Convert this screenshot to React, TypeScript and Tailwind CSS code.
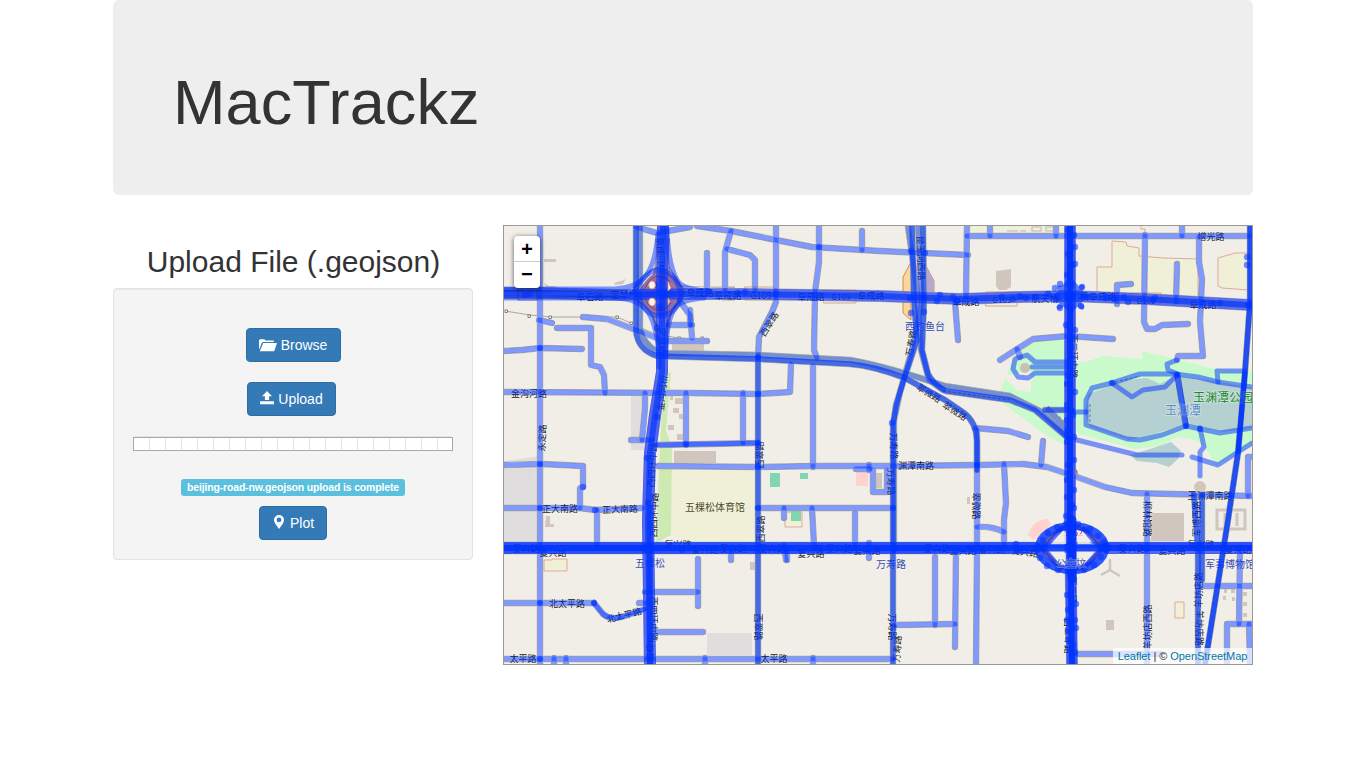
import React from "react";

type Road = [string, number?]; // path, overlay passes (1.5 marks a footpath without a road bed)

const roads: Road[] = [
  ["M540 226V664"],
  ["M539 320L552 323"],
  ["M557 328H591V365L600 367L604 375L605 393"],
  ["M504 351L522 350L540 348L582 349"],
  ["M583 317L607 319L657 338"],
  ["M636 227L657 233L690 227"],
  ["M697 226L731 231L776 240L812 247L880 251L968 255"],
  ["M679 300L690 315V325"],
  ["M668 325H692"],
  ["M668 341H707"],
  ["M690 310L692 338"],
  ["M707 253V289"],
  ["M731 231L725 252V290"],
  ["M727 249L750 255L755 260V290"],
  ["M776 226V302L772 312L759 337L758 358"],
  ["M819 226V262L815 292L814 350L817 358"],
  ["M862 231V250"],
  ["M791 364L790 392L758 394L690 393L504 392"],
  ["M813 366V467"],
  ["M967 226L966 296"],
  ["M967 236H1250"],
  ["M990 226V236"], ["M1056 226V236"], ["M1182 226V236"],
  ["M955 302L958 340"],
  ["M1000 360L1033 339L1068 336L1113 339"],
  ["M1017 349L1020 357"],
  ["M1068 362H1035L1027 355L1015 359L1013 369L1018 377L1028 378L1035 373H1068", 1.5],
  ["M1032 367H1068", 1.5],
  ["M1145 235L1144 322L1147 329H1155L1162 325L1188 324"],
  ["M1117 304V285L1131 284"],
  ["M1177 264L1176 302"],
  ["M1199 237V262L1202 279L1200 322L1203 356H1178L1177 360"],
  ["M1177 360L1167 364L1168 370L1178 374", 1.5],
  ["M1186 426L1162 435L1140 440L1127 439L1086 425V400L1092 388L1112 383L1140 374H1175L1198 377L1218 382L1252 387", 1.5],
  ["M1186 426L1220 433L1252 428", 1.5],
  ["M1112 383L1132 397L1143 390L1165 387L1177 375", 1.5],
  ["M1177 375L1186 426", 1.5],
  ["M1200 428L1204 447L1200 452V476", 1.5],
  ["M1218 382L1217 371H1245", 1.5],
  ["M1077 440L1137 455H1182", 1.5],
  ["M1192 457L1218 465L1238 452L1252 443", 1.5],
  ["M1077 477L1105 487L1132 493L1252 496"],
  ["M1147 494V664"],
  ["M1252 457H1248V496"],
  ["M1070 412H1086", 1.5],
  ["M645 393V408L642 440"], ["M631 440H652"], ["M686 393V445"],
  ["M657 445L758 443", 2],
  ["M504 465L542 464L583 466V487L580 488V508"],
  ["M504 508H580L595 510L643 508"],
  ["M597 510V546"],
  ["M658 466L758 467L813 466L893 466L977 465L1023 464L1047 467L1068 474"],
  ["M743 393V443"],
  ["M856 469H870"], ["M873 470V492H887V470"],
  ["M869 465V470"],
  ["M758 508H893"], ["M784 508V518"], ["M812 508L814 545"], ["M855 513V546"],
  ["M975 428L1008 431L1028 437"], ["M1043 441L1041 465"],
  ["M1004 464L1006 503L1004 520V545"],
  ["M977 527Q992 526 1004 532"],
  ["M731 548V560"], ["M698 559V606"], ["M645 592H698"], ["M657 632H703"],
  ["M504 603H594"],
  ["M594 603L603 614Q610 620 622 617L645 609", 2],
  ["M639 603H650"],
  ["M504 659H893"], ["M554 658V664"], ["M566 658V664"], ["M705 658V664"], ["M813 658V664"],
  ["M787 548V560"], ["M869 543V558"], ["M784 545L786 560"],
  ["M935 557V625"], ["M956 548L955 647"], ["M895 625L955 624"],
  ["M977 430L977 548L976 664"],
  ["M1077 654H1160"], ["M1201 586H1252"], ["M1240 548L1239 624"],
  ["M1252 624H1227V664"], ["M1249 624L1250 664"],
  ["M504 545H1252"], ["M504 551H1030"],
];

const secondary: Road[] = [
  ["M636 226V331Q638 350 657 356L758 359L850 364Q874 366 905 378L945 400L964 413Q976 422 977 440V470", 2],
  ["M640 226V328Q643 345 660 353L758 355L850 360Q885 366 945 386L1010 396L1040 411L1067 436", 1],
  ["M758 358V664", 2],
  ["M912 226L914 300L917 340L905 376L896 405L893 425V664", 2],
  ["M918 226L922 300L912 350L900 392L894 420V550", 1],
  ["M923 226L924 300L922 350L928 374Q933 384 946 391L1010 400L1035 410L1068 438", 2],
  ["M908 226L917 290L921 350L929 380L943 390", 1],
  ["M1045 410H1072", 2],
  ["M1048 410L1068 430", 1],
  ["M1250 226V302L1245 372L1238 453L1228 520L1218 583L1205 664", 3],
  ["M1194 495L1198 550V664", 2],
  ["M1202 495V580", 2],
];

const mains = [
  "M504 293H540L620 295L662 294H690L743 294L812 295L880 296L960 299L1020 297L1070 296L1145 299L1250 305",
  "M504 548H1035M1108 548H1252",
  "M663 226L662 290L662 372L655 415L650 453L648 520L650 664",
  "M1070 226V400L1070 520L1072 664",
];

const dots: [number, number][] = [
  [525, 295], [530, 294], [540, 348], [540, 464], [540, 508], [540, 548], [540, 603], [540, 659],
  [583, 487], [595, 510], [594, 603], [655, 285], [660, 307], [657, 328], [657, 417], [647, 458], [648, 503],
  [758, 357], [758, 394], [758, 443], [758, 467], [758, 508], [776, 294], [745, 292], [738, 293], [686, 444],
  [650, 548], [643, 548], [682, 550], [820, 548], [785, 548], [893, 548], [893, 508], [892, 423], [977, 465],
  [819, 247], [911, 251], [925, 253], [911, 313], [924, 312], [910, 298], [924, 297], [937, 301], [940, 295],
  [953, 297], [957, 301], [1002, 297], [1020, 296], [1048, 294], [1055, 288], [1060, 284], [1082, 287],
  [1060, 308], [1081, 306], [1056, 300], [1087, 297], [1124, 297], [1128, 302], [1153, 300], [1155, 298],
  [1220, 303], [1247, 257], [1247, 265], [1248, 305], [1072, 265], [1074, 235], [1068, 376], [1068, 430],
  [1074, 460], [1067, 480], [1072, 505], [1186, 426], [1200, 429], [1177, 375], [1112, 383], [1068, 610],
  [1075, 620], [1068, 631], [1073, 645], [1120, 548], [1124, 548], [1016, 544], [1020, 550], [970, 548],
  [980, 548], [1238, 548], [1198, 548], [1147, 549], [817, 548], [1043, 540], [1048, 533], [1057, 527],
  [1066, 524], [1078, 524], [1090, 529], [1098, 536], [1104, 542], [1106, 550], [1101, 557], [1094, 565],
  [1084, 570], [1070, 573], [1058, 570], [1047, 566], [1040, 558], [1036, 548],
  [1068, 230], [1075, 247], [1068, 254], [1075, 264], [1067, 275], [1066, 325], [1075, 330], [1067, 384],
  [1075, 392], [1067, 405], [1073, 415], [1067, 420], [1074, 437], [1067, 442], [1068, 465], [1074, 490],
  [1067, 497], [1074, 508], [1066, 516], [1067, 595], [1076, 604], [1067, 620], [1076, 628], [1068, 640],
  [1075, 652], [1035, 297], [1026, 298], [1013, 299], [1107, 297], [1114, 299],
];

type Label = [string, number, number, number?, number?, string?]; // text, centre x/y, angle, size, colour

const labels: Label[] = [
  ["阜石路", 590, 296], ["定慧桥", 624, 294], ["阜成路", 700, 292], ["阜成路", 728, 295], ["G109", 761, 295],
  ["阜成路", 811, 296], ["G109", 841, 296, 0, 8], ["阜成路", 871, 295], ["阜成路", 966, 301], ["G109", 1002, 299, 0, 8],
  ["航天桥", 1045, 298], ["桥阜成路", 1098, 296], ["G109", 1146, 300, 0, 8], ["阜成路", 1203, 304], ["增光路", 1211, 236],
  ["阜成门桥", 661, 255, 88], ["定慧桥", 661, 341, 90], ["西翠路", 769, 324, -58],
  ["昆玉河西路", 921, 258, 88], ["万寿路", 911, 343, -80], ["西三环中路", 1073, 356, 90],
  ["金沟河路", 529, 393], ["金沟河桥", 662, 393, -84], ["永定路", 542, 438, -88],
  ["西四环中路", 652, 465, -86], ["西四环中路", 654, 515, -88],
  ["正大南路", 560, 508], ["正大南路", 620, 509, -2], ["翠微路", 929, 393, 32], ["翠微路", 955, 411, 32],
  ["西翠路", 759, 455, -90], ["西翠路", 760, 529, -90], ["万寿路", 894, 446, 88], ["万寿路", 891, 482, 88],
  ["翠微路", 976, 506, 90], ["渊潭南路", 916, 465], ["玉渊潭南路", 1210, 495],
  ["柳林馆路", 1147, 519, 90], ["军博西路", 1196, 519, -90],
  ["复兴路", 526, 548], ["复兴路", 553, 552], ["复兴路", 678, 544], ["复兴路", 705, 549], ["复兴路", 733, 548],
  ["复兴路", 772, 548], ["复兴路", 811, 553], ["复兴路", 839, 548], ["复兴路", 867, 550], ["复兴路", 937, 548],
  ["复兴路", 963, 550], ["复兴路", 992, 549], ["复兴路", 1025, 552, 8], ["复兴路", 1132, 548], ["复兴路", 1172, 550],
  ["复兴路", 1201, 544], ["复兴路", 1238, 549],
  ["北太平路", 567, 603], ["北太平路", 624, 615, -14], ["西四环中路", 653, 619, 90], ["五棵松", 650, 648, -88],
  ["太平路", 523, 658], ["太平路", 774, 658], ["西翠路", 758, 627, 90], ["万寿路", 892, 627, 90],
  ["万寿路", 897, 649, -86], ["羊坊店西路", 1147, 627, -90], ["羊坊店路", 1198, 590, -90], ["羊坊店路", 1199, 628, 90],
  ["西三环", 1072, 590, 90], ["西三环路", 1068, 636, 90],
  ["五棵松体育馆", 715, 506, 0, 10, "#4d4d20"],
  ["西钓鱼台", 925, 325, 0, 10, "#3a4fae"],
  ["五棵松", 650, 562, 0, 10, "#3a4fae"],
  ["万寿路", 891, 563, 0, 10, "#3a4fae"],
  ["公主坟", 1071, 562, 0, 10, "#3a4fae"],
  ["军事博物馆", 1230, 563, 0, 10, "#3a4fae"],
  ["3262", 1073, 532, 0, 9, "#a00060"],
];

const parkLabels: Label[] = [
  ["玉渊潭公园", 1223, 396, 0, 12, "#128a2c"],
  ["玉渊潭", 1183, 409, 0, 12, "#5689c9"],
];

function MapLabel({ l }: { l: Label }) {
  const [text, x, y, angle = 0, size = 9, color = "#161616"] = l;
  return (
    <text
      transform={`translate(${x} ${y}) rotate(${angle})`}
      fontSize={size}
      fill={color}
      stroke="#f8f6f1"
      strokeOpacity={0.5}
      strokeWidth={1.4}
      paintOrder="stroke"
      textAnchor="middle"
      dominantBaseline="central"
    >
      {text}
    </text>
  );
}

function Terrain() {
  return (
    <g>
      <rect x="503" y="225" width="750" height="440" fill="#f1eee8" />
      <path d="M504 461L540 456V545H504ZM631 396H645V450H631ZM707 633H752V655H707Z" fill="#e0dddf" />
      <path d="M504 482H532V460L504 462ZM504 482H515V510H504Z" fill="#dedcdd" />
      <path d="M664 372L671 373L666 430L672 448L671 535L656 543L660 445Z" fill="#cdebb0" />
      <path d="M672 468H758V544H680V535H672ZM967 226H1068V233H967Z" fill="#f0f0d8" />
      <path d="M997 398L1009 370L1017 349L1033 341L1065 338V362H1086L1102 356L1142 359V351L1180 360L1215 369L1253 371V445L1216 466L1205 447L1195 440L1177 437L1160 446L1134 449L1072 432L1064 445L1047 436L1012 410Z" fill="#c8facc" />
      <path d="M1088 394L1110 386L1126 380L1147 378L1160 384L1175 376L1210 380L1252 388V428L1224 432L1187 424L1157 433L1130 440L1090 427L1085 413Z" fill="#b5d0d0" />
      <path d="M1130 455L1153 448L1171 442L1181 451L1178 459L1169 467L1157 463L1137 461Z" fill="#b5d0d0" />
      <path d="M1003 376L1031 371V392L1017 390Z" fill="#f1eee8" />
      <path d="M1097 299V267H1112V241L1126 242L1127 246L1139 248V256L1163 258V258L1198 259V303ZM1218 286V258L1235 253H1249V290L1222 288Z" fill="#f0f0d8" stroke="#dfa89b" />
      <path d="M1141 226V229H1145V250M544 560H552V559H567V571H544ZM785 512H802V527H785ZM1175 602H1184V618H1175Z" fill="#f0f0d8" stroke="#dfa89b" />
      <path d="M770 473H780V487H770ZM800 473H808V479H800ZM791 511H801V521H791Z" fill="#82d5b1" />
      <path d="M903 313V277L911 262V320ZM924 262L934 281V292L924 296ZM722 288H735V300H722Z" fill="#ffd59b" stroke="#bd7d38" strokeWidth=".8" />
      <path d="M924 262L934 280V293H925Z" fill="#b8a6cb" />
      <path d="M996 271L1011 269V287L1006 290H999L996 286ZM674 451H716V463H674ZM675 398H683V404H675ZM673 408H679V413H673ZM679 414H685V419H679ZM668 425H674V430H668ZM677 434H683V440H677ZM672 343H704V351H672ZM1151 513H1184V541H1151ZM1106 620H1114V630H1106ZM546 516H550V524H554V527H545ZM544 259H556V262H544ZM614 283L624 280L626 278L623 284L615 285ZM544 283L549 286H556V288H546ZM857 473H865V486H857ZM1195 507H1205V513H1195ZM750 562H755V570H750ZM967 497H970V504H967ZM874 473H882V488H874Z" fill="#d1c6bd" />
      <path d="M1217 510H1245V529H1217ZM1225 513V526M1237 513V526" stroke="#d1c6bd" strokeWidth="3" fill="none" />
      <path d="M856 470H868V486H856M1028 535Q1033 519 1048 519L1051 524L1034 540Z" fill="#ffd2cf" />
      <circle cx="1025" cy="368" r="5" fill="#cbbfb4" />
      <circle cx="1200" cy="487" r="6" fill="#d1c6bd" />
      <path d="M1110 559V570L1101 575M1110 570L1120 576" stroke="#d1c6bd" strokeWidth="2.5" fill="none" />
      <path d="M1007 231H1018M1020 231H1026M1032 227H1041V231H1032ZM1046 227H1054V231H1046Z" stroke="#d1c6bd" strokeWidth="1.5" fill="none" />
      <path d="M1224 591h3M1231 591h4M1243 594h4M1223 598h3M1232 599h3M1243 604h4M1243 615h4M670 398h3" stroke="#d1c6bd" strokeWidth="4" />
      <path d="M1074 471h3v3h-3M1076 469v6" stroke="#c04060" fill="none" />
      <path d="M671 284Q687 288 735 287M505 311L530 315L551 317L583 317H617L631 323L657 335L680 338L708 340" stroke="#969696" strokeWidth=".8" fill="none" />
      {[[506, 311], [529, 316], [550, 317], [583, 317], [617, 317], [631, 323], [679, 338], [702, 338]].map(([x, y]) => (
        <rect key={x} x={x - 1} y={y - 1} width="2.4" height="2.4" fill="#fff" stroke="#555" strokeWidth=".7" />
      ))}
    </g>
  );
}

function Tracks() {
  return (
    <g fill="none" stroke="#0033ff" strokeLinecap="round" strokeLinejoin="round">
      {roads.map(([d, passes = 1], i) => (
        <path key={i} d={d} strokeWidth="5" strokeOpacity={passes >= 2 ? 0.72 : 0.5} />
      ))}
      {secondary.map(([d, passes = 1], i) => (
        <path key={i} d={d} strokeWidth="5.5" strokeOpacity={passes > 2 ? 0.84 : passes > 1 ? 0.66 : 0.42} />
      ))}
      {mains.map((d, i) => (
        <g key={i}>
          <path d={d} strokeWidth={i === 0 || i === 3 ? 11 : 12} strokeOpacity={i === 3 ? 0.72 : 0.6} />
          <path d={d} strokeWidth="6" strokeOpacity={i === 3 ? 0.9 : 0.66} />
        </g>
      ))}
      <path d="M504 548H1035M1108 548H1252M650 505V664" strokeWidth="6" strokeOpacity=".6" strokeLinecap="butt" />
      <path d="M1072 520V578" strokeWidth="9" strokeOpacity=".85" />
      <path d="M1040 548H1108" strokeWidth="7" strokeOpacity=".88" />
      <ellipse cx="1072" cy="548" rx="33" ry="22" strokeWidth="8" strokeOpacity=".8" />
      <path d="M1044 548L1062 528M1100 548L1084 529M1045 550L1060 568M1100 550L1084 568" strokeWidth="5" strokeOpacity=".65" />
      <path d="M1070 280L1084 296L1071 310L1056 297ZM1060 288L1082 307M1082 287L1059 307" strokeWidth="5" strokeOpacity=".6" />
      <g strokeOpacity=".48" strokeWidth="5">
        <path d="M504 289H615Q635 288 644 278Q655 267 658 234" />
        <path d="M504 298H617Q639 299 648 312Q659 329 659 367" />
        <path d="M667 228Q668 264 677 280Q683 290 708 291" />
        <path d="M666 356Q666 319 676 307Q681 300 704 298" />
        <path d="M634 292Q646 269 660 270Q676 272 681 293" />
        <path d="M638 295Q644 315 659 316Q675 316 681 297" />
      </g>
      <g stroke="none" fill="#0033ff" fillOpacity=".55">
        {dots.map(([x, y], i) => <circle key={i} cx={x} cy={y} r="3.2" />)}
      </g>
    </g>
  );
}

function RoadMap() {
  return (
    <svg className="block h-[438px] w-[748px]" viewBox="504 226 748 438" fontFamily='"Noto Sans CJK SC", sans-serif'>
      <Terrain />
      <g fill="none" strokeLinecap="round" strokeLinejoin="round">
        {[...roads, ...secondary].filter(([, p]) => p !== 1.5).map(([d], i) => <path key={i} d={d} stroke="#aaa79f" strokeWidth="6.4" />)}
        {roads.filter(([, p]) => p !== 1.5).map(([d], i) => <path key={i} d={d} stroke="#fff" strokeWidth="4.6" />)}
        {secondary.map(([d], i) => <path key={i} d={d} stroke="#cdd3a8" strokeWidth="6" />)}
        {mains.map((d, i) => (
          <g key={i}>
            <path d={d} stroke="#b3a6c4" strokeWidth="12" />
            <path d={d} stroke={i === 0 ? "#e8cdb6" : "#d6b8cf"} strokeWidth="10" />
          </g>
        ))}
        <path d="M652 283Q660 262 657 240M671 283Q665 262 668 240M650 305Q659 325 658 352M673 303Q665 325 666 352" stroke="#a58bb5" strokeWidth="4" />
        <path d="M639 294Q662 252 684 293Q661 335 639 294" fill="#8a6cb4" stroke="#9a6c9c" strokeWidth="3" />
        <path d="M645 290Q655 270 666 276M646 300Q656 318 667 309M671 283Q680 292 675 303" stroke="#e07a50" strokeWidth="1" />
        <path d="M1042 548Q1072 505 1102 548Q1072 591 1042 548" stroke="#a36489" strokeWidth="4" />
        <path d="M745 287H772Q775 287 775 290V300H745ZM824 290H856V303H824ZM986 292H1017V306H986ZM1131 293H1161V304H1131Z" stroke="#d3a985" />
      </g>
      {labels.map((l, i) => <MapLabel key={i} l={l} />)}
      <Tracks />
      <g fill="#fbf5f2" stroke="#ee8850" strokeWidth=".8">
        <ellipse cx="652" cy="285" rx="3.4" ry="4" />
        <ellipse cx="652" cy="302" rx="3.4" ry="4" />
        <path d="M668 281L671 288L668 291ZM668 298L670 301L668 305Z" />
      </g>
      <g fill="none" stroke="#16299b" strokeWidth=".8" opacity=".65">
        <path d="M632 291Q648 270 658 267M669 267Q678 281 686 292M636 299Q651 309 657 326M684 298Q672 306 667 326M644 290Q655 267 670 282M645 299Q657 320 671 303M1175 377L1183 425M1180 375L1188 424" />
        <path d="M504 291H620M504 297H620M518 290V300H537V290" />
        <path d="M1048 406L1068 425M943 391L1010 400M1090 404V424M1115 382L1140 376" strokeDasharray="3 2" />
      </g>
      <path d="M1051 544L1058 536L1066 531V544ZM1078 532L1087 538L1091 544H1078ZM1051 553H1066V561L1058 561ZM1078 553H1091L1083 561H1078Z" fill="#f1eee8" opacity=".8" />
      <g fill="#3a4fae" opacity=".75">
        <MapLabel l={["公主坟", 1071, 562, 0, 10, "#3a4fae"]} />
      </g>
      {parkLabels.map((l, i) => <MapLabel key={i} l={l} />)}
      <g fill="none" stroke="#0033ff" strokeWidth="5" strokeOpacity=".7">
        <path d="M1245 372L1238 453" />
        <path d="M1178 377L1186 424" strokeOpacity=".4" />
      </g>
    </svg>
  );
}

function FolderIcon() {
  return (
    <svg className="h-[14px] w-[18px]" viewBox="0 0 18 14" fill="currentColor">
      <path d="M0 11V2.2L1 1.2H5.2L6.4 2.4H14.7V4H4.2L2.8 4.8L.4 11Z" />
      <path d="M4.2 5H18L15.2 13.2H.8Z" />
    </svg>
  );
}

function UploadIcon() {
  return (
    <svg className="mb-0.5 h-[14px] w-[14px]" viewBox="0 0 14 14" fill="currentColor">
      <path d="M7 0L12 5.2H9.1V9H4.9V5.2H2ZM0 10.2H14V13.2H0Z" />
    </svg>
  );
}

function MarkerIcon() {
  return (
    <svg className="mb-0.5 h-[14px] w-[14px]" viewBox="0 0 14 14" fill="currentColor" fillRule="evenodd">
      <path d="M7 0A5 5 0 0 1 12 5C12 8 9 11 7 14C5 11 2 8 2 5A5 5 0 0 1 7 0ZM7 2.5A2.4 2.4 0 1 0 7 7.3A2.4 2.4 0 0 0 7 2.5Z" />
    </svg>
  );
}

function Button({ icon, children, className }: { icon: React.ReactNode; children: string; className: string }) {
  return (
    <button className={`flex h-[34px] shrink-0 items-center justify-center gap-1 rounded border border-[#2e6da4] bg-[#337ab7] text-sm leading-5 text-white ${className}`}>
      {icon}
      <span>{children}</span>
    </button>
  );
}

export default function App() {
  return (
    <div className="h-[768px] overflow-hidden bg-white font-['Liberation_Sans',Arial,sans-serif] text-[#333]">
      <main className="mx-auto w-[1140px]">
        <header className="h-[195px] rounded-md bg-[#eee] px-[60px] pt-[68px]">
          <h1 className="text-[63px] leading-[69px] font-normal tracking-[0.1px]">MacTrackz</h1>
        </header>
        <div className="mt-[30px] flex gap-[30px]">
          <section className="w-[360px]">
            <h2 className="pt-5 pl-px text-center text-[30px] leading-[33px]">Upload File (.geojson)</h2>
            <div className="mt-[10px] flex h-[272px] flex-col items-center rounded border border-[#e3e3e3] bg-[#f4f4f4] px-[19px] pt-[39px] shadow-[inset_0_1px_1px_rgba(0,0,0,.05)]">
              <Button className="w-[95px]" icon={<FolderIcon />}>Browse</Button>
              <Button className="mt-5 mr-[3px] w-[89px]" icon={<UploadIcon />}>Upload</Button>
              <div className="mt-5 h-5 w-[320px] shrink-0 rounded bg-[#f5f5f5] pt-px shadow-[inset_0_1px_2px_rgba(0,0,0,.1)]">
                <div className="h-[14px] border border-[#a9a9a9] bg-white bg-[repeating-linear-gradient(to_right,#fff_0px,#fff_15px,#e6e6e6_15px,#e6e6e6_16px)]" />
              </div>
              <span className="mt-[23px] flex h-[17px] w-[224px] shrink-0 items-center justify-center rounded-[3px] bg-[#5bc0de] text-[10.5px] leading-none font-bold tracking-[-0.17px] whitespace-nowrap text-white">
                beijing-road-nw.geojson upload is complete
              </span>
              <Button className="mt-[10px] w-[68px]" icon={<MarkerIcon />}>Plot</Button>
            </div>
          </section>
          <section className="relative h-[440px] w-[750px] overflow-hidden border border-[#999]">
            <RoadMap />
            <div className="absolute top-[10px] left-[10px] w-[26px] overflow-hidden rounded bg-white text-center font-['Liberation_Mono',monospace] font-bold text-black shadow-[0_1px_5px_rgba(0,0,0,.65)]">
              <div className="h-[26px] border-b border-[#ccc] text-[20px] leading-[29px]">+</div>
              <div className="h-[26px] text-[20px] leading-[28px]">−</div>
            </div>
            <div className="absolute right-0 bottom-0 flex h-4 w-[139px] items-center justify-center bg-white/70 text-[11px] leading-4 tracking-[-0.05px] whitespace-pre">
              <span className="text-[#0078a8]">Leaflet</span>{" | © "}<span className="text-[#0078a8]">OpenStreetMap</span>
            </div>
          </section>
        </div>
      </main>
    </div>
  );
}
